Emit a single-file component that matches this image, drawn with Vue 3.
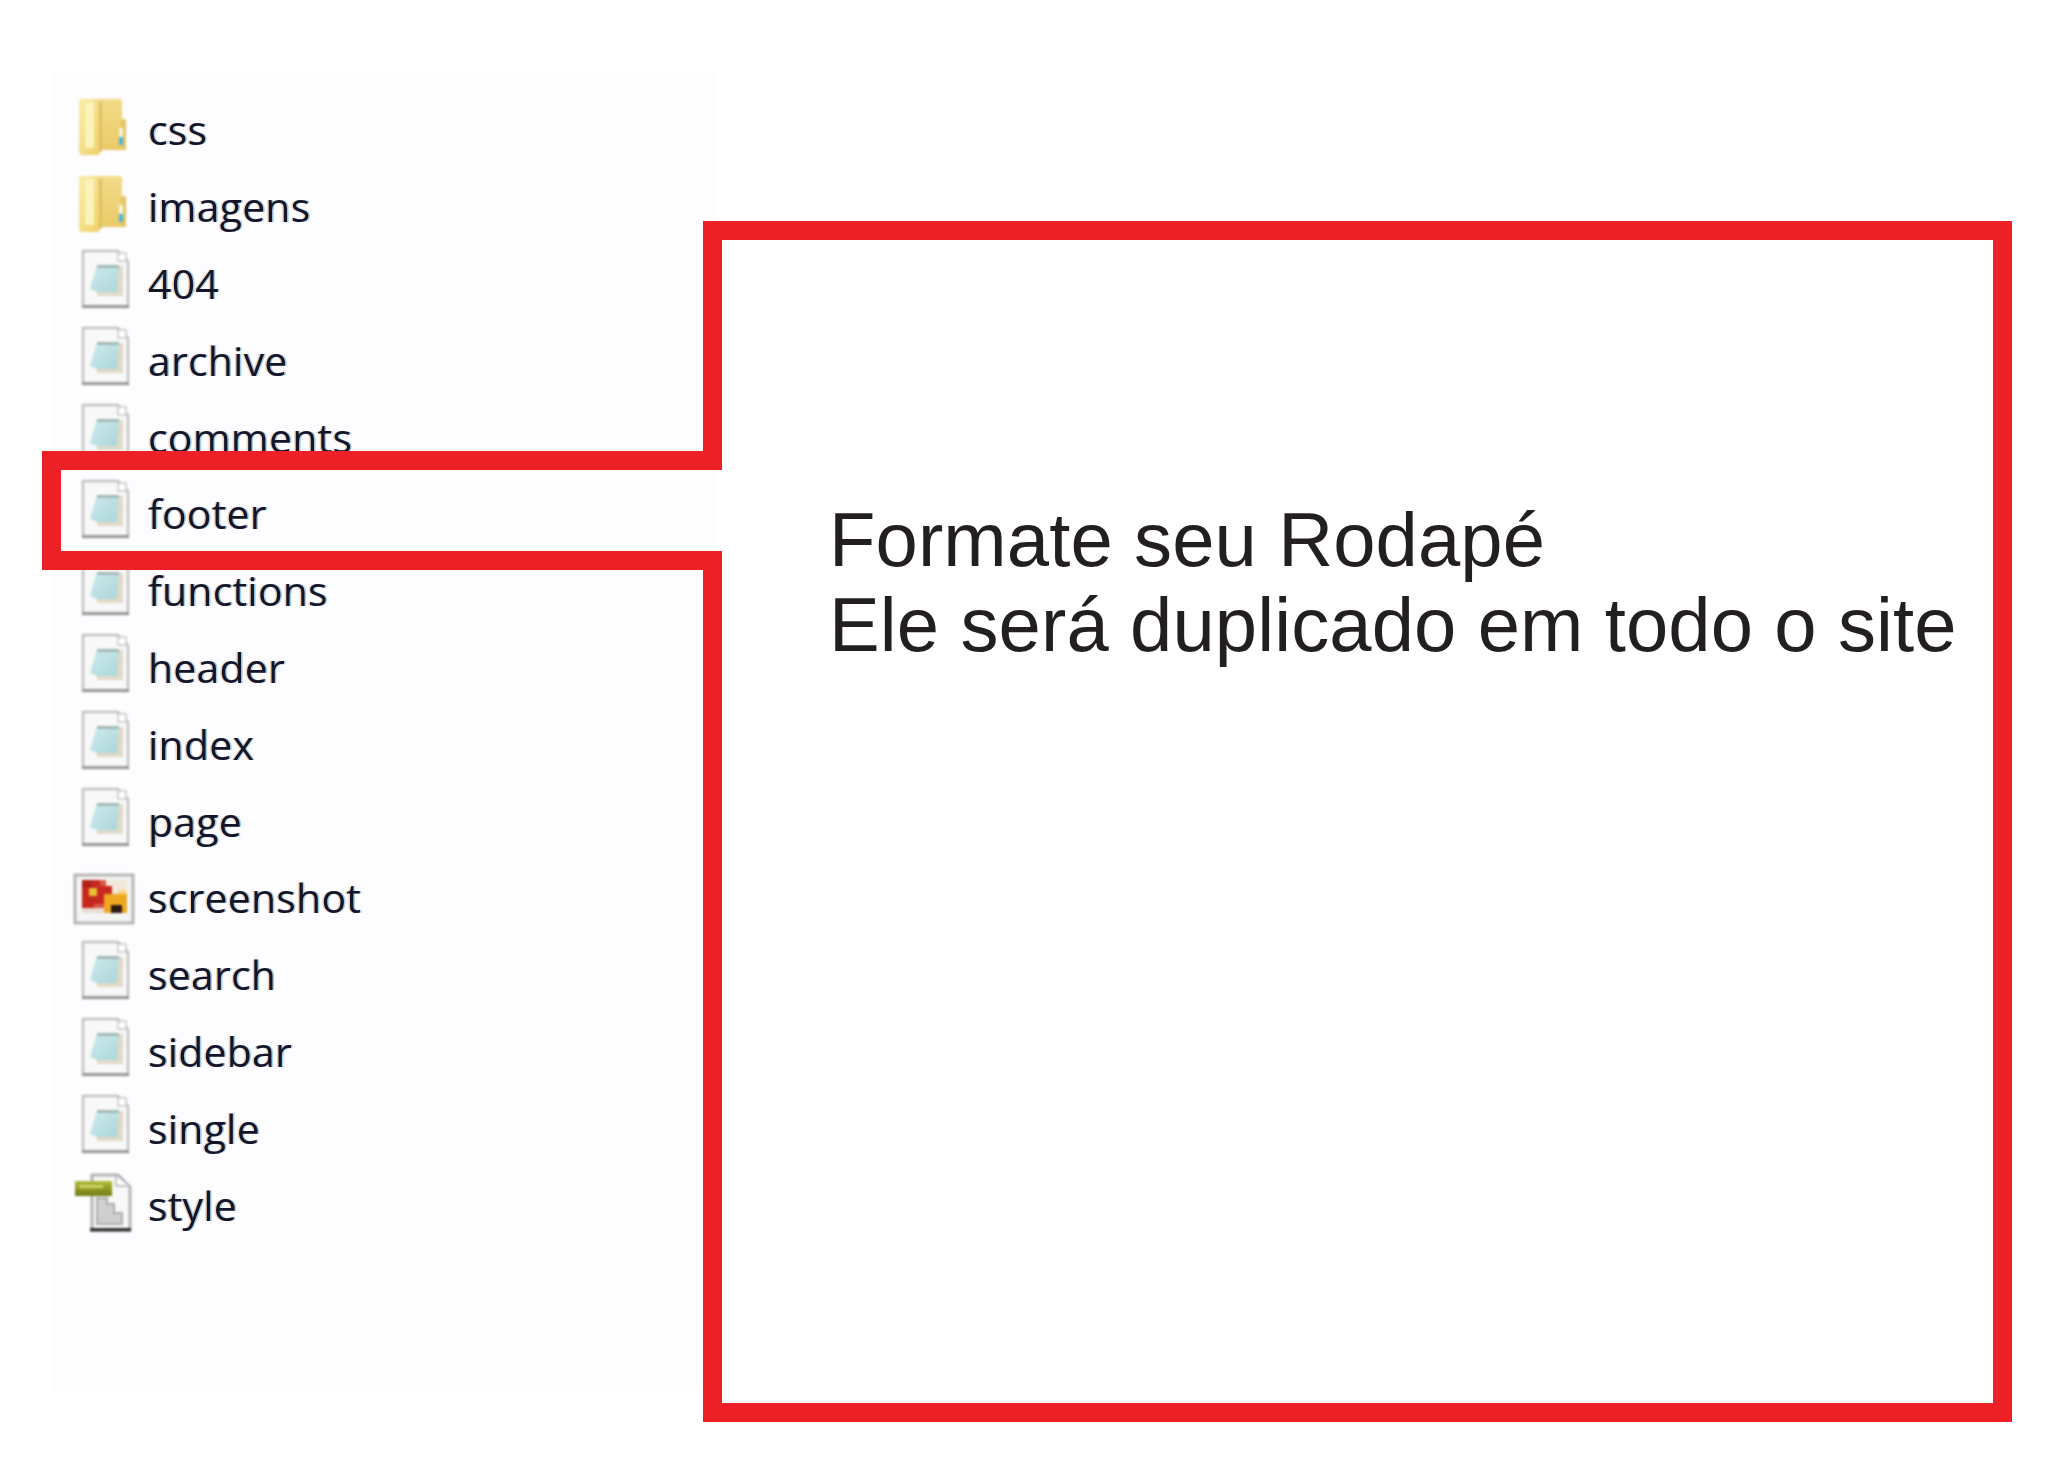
<script setup>
const files = [
  { name: 'css', type: 'folder' },
  { name: 'imagens', type: 'folder' },
  { name: '404', type: 'doc' },
  { name: 'archive', type: 'doc' },
  { name: 'comments', type: 'doc' },
  { name: 'footer', type: 'doc' },
  { name: 'functions', type: 'doc' },
  { name: 'header', type: 'doc' },
  { name: 'index', type: 'doc' },
  { name: 'page', type: 'doc' },
  { name: 'screenshot', type: 'image' },
  { name: 'search', type: 'doc' },
  { name: 'sidebar', type: 'doc' },
  { name: 'single', type: 'doc' },
  { name: 'style', type: 'css' }
]
</script>

<template>
  <div class="page">
    <ul class="file-list">
      <li v-for="file in files" :key="file.name" class="file-row">
        <svg class="file-icon" width="70" height="70" viewBox="0 0 70 70">
          <defs>
            <linearGradient id="leaf" x1="0" y1="0" x2="1" y2="1">
              <stop offset="0" stop-color="#fbeea6" />
              <stop offset="1" stop-color="#eed06a" />
            </linearGradient>
            <linearGradient id="back" x1="0" y1="0" x2="0" y2="1">
              <stop offset="0" stop-color="#f3dc88" />
              <stop offset="1" stop-color="#e9c965" />
            </linearGradient>
            <linearGradient id="sheet" x1="0" y1="0" x2="1" y2="1">
              <stop offset="0" stop-color="#cdeaec" />
              <stop offset="1" stop-color="#aad6da" />
            </linearGradient>
            <linearGradient id="tab" x1="0" y1="0" x2="0" y2="1">
              <stop offset="0" stop-color="#b4bc3a" />
              <stop offset="1" stop-color="#707c14" />
            </linearGradient>
          </defs>

          <g v-if="file.type === 'folder'" transform="translate(0,-1)">
            <path d="M10 9H50L52 11V29H56V60H30L24 65H11L9 62V10Z" fill="url(#back)" />
            <path d="M9 9H26L29 13V65H12L9 62Z" fill="url(#leaf)" />
            <rect x="15" y="12" width="9" height="46" fill="#fcf3bc" />
            <rect x="29" y="12" width="3" height="50" fill="#dfc063" />
            <rect x="51" y="30" width="5" height="29" fill="#e3c665" />
            <rect x="49" y="38" width="4" height="10" fill="#f5f3dc" />
            <rect x="49" y="47" width="4" height="8" fill="#4fb4dc" />
          </g>

          <g v-else-if="file.type === 'doc'">
            <path d="M13 6H48L58 16V62H13Z" fill="#f8f8f8" stroke="#c2c2c2" stroke-width="2.5" />
            <rect x="12" y="60" width="47" height="3" fill="#9a9a9a" />
            <rect x="48" y="8" width="8" height="8" fill="#ffffff" stroke="#c8c8c8" stroke-width="1.5" />
            <rect x="27" y="21" width="26" height="30" fill="#e0dac6" />
            <rect x="27" y="20" width="22" height="3" fill="#a4b8b8" />
            <path d="M26 23H49L47 47H27L20 44Z" fill="url(#sheet)" />
          </g>

          <g v-else-if="file.type === 'image'" transform="translate(0,7)">
            <rect x="5" y="9" width="58" height="48" fill="#f4f4f4" stroke="#b6b6b6" stroke-width="3" />
            <rect x="12" y="14" width="45" height="33" fill="#f0e8da" />
            <rect x="12" y="14" width="24" height="28" fill="#c6281f" />
            <rect x="12" y="14" width="10" height="8" fill="#b32018" />
            <rect x="30" y="14" width="6" height="6" fill="#d8584a" />
            <rect x="36" y="20" width="6" height="10" fill="#c6281f" />
            <rect x="19" y="22" width="8" height="8" fill="#e8c030" />
            <rect x="12" y="42" width="22" height="5" fill="#e9dcd2" />
            <rect x="24" y="38" width="10" height="4" fill="#d8584a" />
            <rect x="34" y="28" width="23" height="19" fill="#f0a820" />
            <rect x="48" y="24" width="9" height="4" fill="#f5d68a" />
            <rect x="41" y="39" width="11" height="8" fill="#2a1a10" />
          </g>

          <g v-else transform="translate(0,4)">
            <path d="M22 4H48L60 16V59H22Z" fill="#f8f8f8" stroke="#b4b4b4" stroke-width="3" />
            <rect x="20" y="57" width="41" height="3.5" fill="#333333" />
            <path d="M46 5V15H59" fill="#ffffff" stroke="#c4c4c4" stroke-width="2" />
            <path d="M27 27H37V33H44V42H52V53H27Z" fill="#cfcfcf" stroke="#adadad" stroke-width="2" />
            <rect x="5" y="10" width="37" height="15" fill="url(#tab)" />
            <rect x="9" y="14" width="24" height="3" fill="#cdd264" />
          </g>
        </svg>
        <span class="file-name">{{ file.name }}</span>
      </li>
    </ul>

    <div class="caption">
      <p>Formate seu Rodapé</p>
      <p>Ele será duplicado em todo o site</p>
    </div>

    <svg class="outline" width="2048" height="1461" viewBox="0 0 2048 1461">
      <path d="M712.5 230.5H2002.5V1412.5H712.5V560.5H51.5V460.5H712.5Z" fill="none" stroke="#ed1f27" stroke-width="19" />
    </svg>
  </div>
</template>

<style>
html, body {
  margin: 0;
  background: #ffffff;
}
</style>

<style scoped>
.page {
  position: relative;
  display: flex;
  align-items: flex-start;
  box-sizing: border-box;
  height: 1461px;
  padding: 72px 0 0 52px;
  overflow: hidden;
}

.file-list {
  box-sizing: border-box;
  width: 662px;
  height: 1318px;
  margin: 0;
  padding: 16px 0 0 18px;
  list-style: none;
  background: #fdfcff;
}

.file-row {
  display: flex;
  align-items: center;
  height: 76.8px;
}

.file-icon {
  flex: none;
  filter: blur(1px);
}

.file-name {
  margin-left: 8px;
  padding-top: 6px;
  font-family: "Open Sans", sans-serif;
  font-size: 41px;
  letter-spacing: 0.2px;
  color: #14142a;
  text-shadow: 1.5px 0 rgba(60, 160, 220, 0.5), -1.5px 0 rgba(240, 170, 90, 0.5);
  filter: blur(0.6px);
}

.caption {
  margin: 425px 0 0 115px;
  font-family: "Liberation Sans", Arial, sans-serif;
  font-size: 76px;
  letter-spacing: 0.12px;
  line-height: 85px;
  color: #231f20;
  white-space: nowrap;
}

.caption p {
  margin: 0;
}

.outline {
  position: absolute;
  top: 0;
  left: 0;
}
</style>
